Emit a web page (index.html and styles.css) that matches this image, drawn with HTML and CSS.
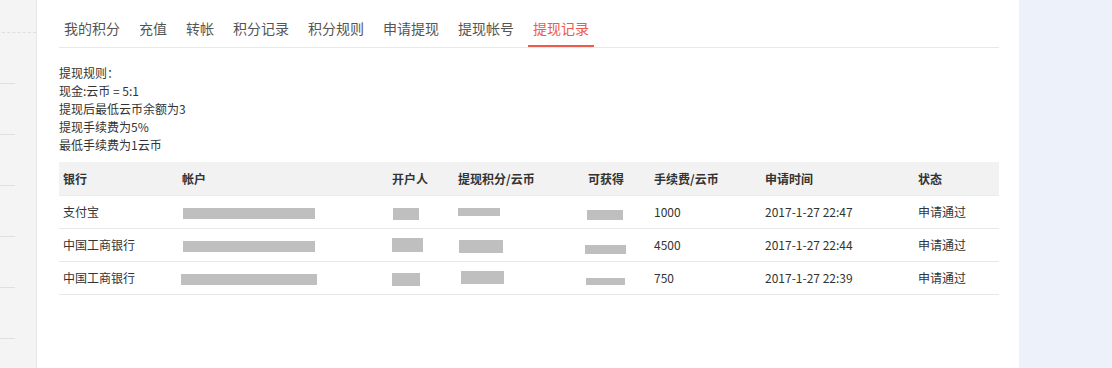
FILE: index.html
```html
<!DOCTYPE html>
<html lang="zh-CN">
<head>
  <meta charset="UTF-8" />
  <title>提现记录</title>
  <link rel="stylesheet" href="styles.css">
</head>
<body>

  <!-- left menu (cut off) -->
  <div class="sidebar">
    <div class="side-head"></div>
    <div class="side-item"></div>
    <div class="side-item"></div>
    <div class="side-item"></div>
    <div class="side-item"></div>
    <div class="side-item"></div>
    <div class="side-item"></div>
  </div>

  <!-- main content -->
  <div class="main">
    <ul class="tabs">
      <li class="tab">我的积分</li>
      <li class="tab">充值</li>
      <li class="tab">转帐</li>
      <li class="tab">积分记录</li>
      <li class="tab">积分规则</li>
      <li class="tab">申请提现</li>
      <li class="tab">提现帐号</li>
      <li class="tab active">提现记录</li>
    </ul>

    <div class="rules">
      <p>提现规则：</p>
      <p>现金:云币 = 5:1</p>
      <p>提现后最低云币余额为3</p>
      <p>提现手续费为5%</p>
      <p>最低手续费为1云币</p>
    </div>

    <table class="records">
      <colgroup>
        <col class="c-bank">
        <col class="c-account">
        <col class="c-owner">
        <col class="c-points">
        <col class="c-get">
        <col class="c-fee">
        <col class="c-time">
        <col class="c-state">
      </colgroup>
      <thead>
        <tr>
          <th>银行</th>
          <th>帐户</th>
          <th>开户人</th>
          <th>提现积分/云币</th>
          <th>可获得</th>
          <th>手续费/云币</th>
          <th>申请时间</th>
          <th>状态</th>
        </tr>
      </thead>
      <tbody>
        <tr>
          <td>支付宝</td>
          <td><span class="mask acc-a"></span></td>
          <td><span class="mask owner-a"></span></td>
          <td><span class="mask pts-a"></span></td>
          <td><span class="mask get-a"></span></td>
          <td>1000</td>
          <td>2017-1-27 22:47</td>
          <td>申请通过</td>
        </tr>
        <tr>
          <td>中国工商银行</td>
          <td><span class="mask acc-a"></span></td>
          <td><span class="mask owner-b"></span></td>
          <td><span class="mask pts-b"></span></td>
          <td><span class="mask get-b"></span></td>
          <td>4500</td>
          <td>2017-1-27 22:44</td>
          <td>申请通过</td>
        </tr>
        <tr>
          <td>中国工商银行</td>
          <td><span class="mask acc-b"></span></td>
          <td><span class="mask owner-c"></span></td>
          <td><span class="mask pts-c"></span></td>
          <td><span class="mask get-c"></span></td>
          <td>750</td>
          <td>2017-1-27 22:39</td>
          <td>申请通过</td>
        </tr>
      </tbody>
    </table>
  </div>

  <!-- right panel -->
  <div class="aside"></div>

</body>
</html>
```

FILE: styles.css
```css
* {
  margin: 0;
  padding: 0;
  box-sizing: border-box;
}

body, html {
  height: 100%;
  overflow: hidden;
}

body {
  display: flex;
  font-family: "Microsoft YaHei", "Noto Sans CJK SC", sans-serif;
  font-size: 12px;
  color: #333;
  background: #fff;
}

/* left menu */
.sidebar {
  width: 37px;
  flex-shrink: 0;
  background: #f4f4f4;
  border-right: 1px solid #e6e6e6;
}

.side-head {
  height: 33px;
  margin-left: 2px;
  border-bottom: 1px dashed #dedede;
}

.side-item {
  width: 15px;
  height: 51px;
  border-bottom: 1px solid #e0e0e0;
}

/* main */
.main {
  flex: 1;
  padding: 12px 20px 0 22px;
}

.tabs {
  list-style: none;
  display: flex;
  gap: 9px;
  border-bottom: 1px solid #e8e8e8;
}

.tab {
  padding: 0 5px;
  height: 35px;
  line-height: 33px;
  font-size: 14px;
  color: #555;
  border-bottom: 2px solid transparent;
  cursor: pointer;
}

.tab.active {
  color: #ed5b4c;
  border-bottom-color: #ed5b4c;
}

.rules {
  margin-top: 16px;
  line-height: 18px;
}

/* table */
.records {
  margin-top: 8px;
  width: 100%;
  table-layout: fixed;
  border-collapse: collapse;
}

.c-bank { width: 119px; }
.c-account { width: 210px; }
.c-owner { width: 66px; }
.c-points { width: 130px; }
.c-get { width: 66px; }
.c-fee { width: 111px; }
.c-time { width: 153px; }
.c-state { width: 85px; }

.records th,
.records td {
  height: 33px;
  padding: 0 4px;
  text-align: left;
  white-space: nowrap;
}

.records th {
  background: #f2f2f2;
  font-weight: bold;
  border-bottom: 1px solid #ececec;
}

.records td {
  border-bottom: 1px solid #e8e8e8;
}

/* blurred private data */
.mask {
  display: inline-block;
  vertical-align: middle;
  background: #bfbfbf;
}

.acc-a { width: 132px; height: 11px; margin-left: 1px; }
.acc-b { width: 136px; height: 11px; margin-left: -1px; }

.owner-a { width: 26px; height: 12px; margin-left: 1px; }
.owner-b { width: 31px; height: 14px; margin-top: -3px; }
.owner-c { width: 28px; height: 13px; }

.pts-a { width: 42px; height: 8px; margin-top: -4px; }
.pts-b { width: 44px; height: 13px; margin-left: 1px; }
.pts-c { width: 43px; height: 13px; margin-left: 3px; margin-top: -4px; }

.get-a { width: 36px; height: 10px; margin-left: -1px; margin-top: 3px; }
.get-b { width: 41px; height: 9px; margin-left: -3px; margin-top: 6px; }
.get-c { width: 39px; height: 7px; margin-left: -2px; margin-top: 4px; }

/* right panel */
.aside {
  width: 93px;
  flex-shrink: 0;
  background: #edf2fa;
}
```
